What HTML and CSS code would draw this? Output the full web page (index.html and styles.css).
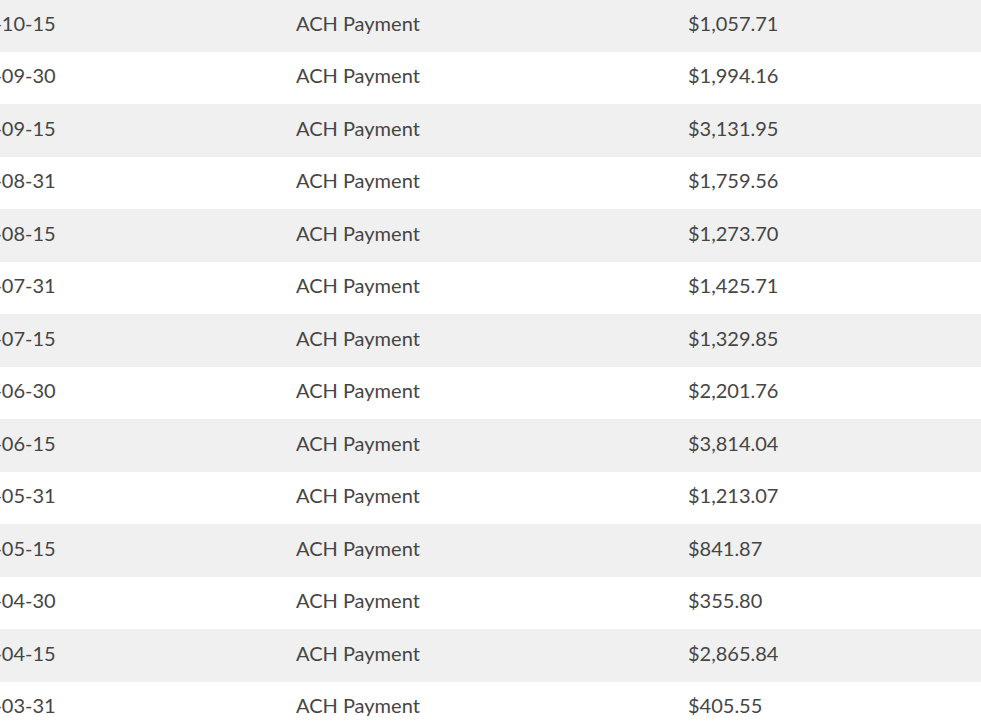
FILE: index.html
```html
<!DOCTYPE html>
<html lang="en">
<head>
<meta charset="utf-8">
<link rel="stylesheet" href="styles.css">
<title>Payments</title>
</head>
<body>
<div class="viewport">
<table class="payments">
<tbody>
<tr><td class="date">2024-10-15</td><td class="desc">ACH Payment</td><td class="amt">$1,057.71</td></tr>
<tr><td class="date">2024-09-30</td><td class="desc">ACH Payment</td><td class="amt">$1,994.16</td></tr>
<tr><td class="date">2024-09-15</td><td class="desc">ACH Payment</td><td class="amt">$3,131.95</td></tr>
<tr><td class="date">2024-08-31</td><td class="desc">ACH Payment</td><td class="amt">$1,759.56</td></tr>
<tr><td class="date">2024-08-15</td><td class="desc">ACH Payment</td><td class="amt">$1,273.70</td></tr>
<tr><td class="date">2024-07-31</td><td class="desc">ACH Payment</td><td class="amt">$1,425.71</td></tr>
<tr><td class="date">2024-07-15</td><td class="desc">ACH Payment</td><td class="amt">$1,329.85</td></tr>
<tr><td class="date">2024-06-30</td><td class="desc">ACH Payment</td><td class="amt">$2,201.76</td></tr>
<tr><td class="date">2024-06-15</td><td class="desc">ACH Payment</td><td class="amt">$3,814.04</td></tr>
<tr><td class="date">2024-05-31</td><td class="desc">ACH Payment</td><td class="amt">$1,213.07</td></tr>
<tr><td class="date">2024-05-15</td><td class="desc">ACH Payment</td><td class="amt">$841.87</td></tr>
<tr><td class="date">2024-04-30</td><td class="desc">ACH Payment</td><td class="amt">$355.80</td></tr>
<tr><td class="date">2024-04-15</td><td class="desc">ACH Payment</td><td class="amt">$2,865.84</td></tr>
<tr><td class="date">2024-03-31</td><td class="desc">ACH Payment</td><td class="amt">$405.55</td></tr>
</tbody>
</table>
</div>
</body>
</html>
```
FILE: styles.css
```css
html, body {
  margin: 0;
  padding: 0;
  background: #ffffff;
}
.viewport {
  width: 981px;
  height: 723px;
  overflow: hidden;
}
.payments {
  border-collapse: collapse;
  margin-left: -52px;
  margin-top: -1px;
  width: 1100px;
  font-family: Lato, "Open Sans", sans-serif;
  font-size: 20px;
  color: #454545;
}
.payments tr {
  height: 52.5px;
}
.payments tr:nth-child(odd) {
  background: #f0f0f0;
}
.payments td {
  padding: 0 0 5px 0;
  vertical-align: middle;
  white-space: nowrap;
}
.date { width: 348px; }
.desc { width: 392px; }
```
